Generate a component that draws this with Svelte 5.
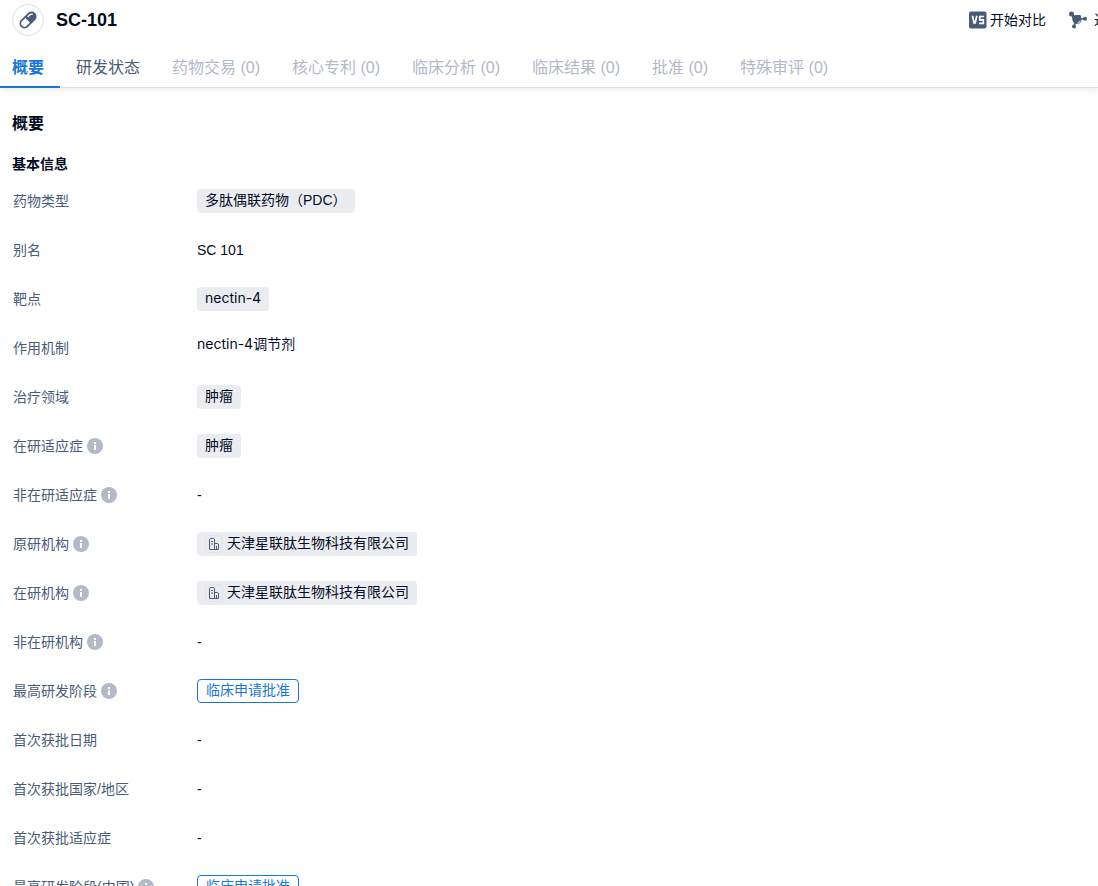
<script>
    const tabs = [
        { name: '概要', state: 'active' },
        { name: '研发状态', state: '' },
        { name: '药物交易 (0)', state: 'empty' },
        { name: '核心专利 (0)', state: 'empty' },
        { name: '临床分析 (0)', state: 'empty' },
        { name: '临床结果 (0)', state: 'empty' },
        { name: '批准 (0)', state: 'empty' },
        { name: '特殊审评 (0)', state: 'empty' }
    ];

    // type: tag | org | stage | strong | text
    const rows = [
        { label: '药物类型', value: '多肽偶联药物（PDC）', type: 'tag' },
        { label: '别名', value: 'SC 101', type: 'text' },
        { label: '靶点', value: 'nectin-4', type: 'tag', latin: true },
        { label: '作用机制', value: 'nectin-4调节剂', type: 'strong' },
        { label: '治疗领域', value: '肿瘤', type: 'tag' },
        { label: '在研适应症', info: true, value: '肿瘤', type: 'tag' },
        { label: '非在研适应症', info: true, value: '-', type: 'text' },
        { label: '原研机构', info: true, value: '天津星联肽生物科技有限公司', type: 'org' },
        { label: '在研机构', info: true, value: '天津星联肽生物科技有限公司', type: 'org' },
        { label: '非在研机构', info: true, value: '-', type: 'text' },
        { label: '最高研发阶段', info: true, value: '临床申请批准', type: 'stage' },
        { label: '首次获批日期', value: '-', type: 'text' },
        { label: '首次获批国家/地区', value: '-', type: 'text' },
        { label: '首次获批适应症', value: '-', type: 'text' },
        { label: '最高研发阶段(中国)', info: true, value: '临床申请批准', type: 'stage' }
    ];
</script>

<div class="page">
    <header>
        <div class="title-bar">
            <span class="avatar">
                <svg width="20" height="20" viewBox="0 0 20 20" aria-hidden="true">
                    <g transform="rotate(45 10 10)">
                        <rect x="5" y="0" width="10" height="20" rx="5" fill="#4a5b78" />
                        <path d="M6.800 10.500h6.400v4.500a3.200 3.200 0 0 1-6.400 0z" fill="#fff" />
                        <path d="M7.600 7.500V5a2.400 2.400 0 0 1 1.200-2" fill="none" stroke="#fff" stroke-width="1.400" stroke-linecap="round" />
                    </g>
                </svg>
            </span>
            <h1>SC-101</h1>
            <div class="actions">
                <button type="button">
                    <svg width="18" height="18" viewBox="0 0 18 18" aria-hidden="true">
                        <rect x="0" y="0.5" width="17.500" height="17" rx="2" fill="#4a5b78" />
                        <path d="M3.500 4.800l1.500 7h1.200l1.600-7M15 5.500h-4.200V8.800h3.500v3.500h-4.300" fill="none" stroke="#fff" stroke-width="1.700" />
                    </svg>
                    开始对比
                </button>
                <button type="button" class="evolve">
                    <svg width="20" height="18" viewBox="0 0 20 18" aria-hidden="true">
                        <path d="M3 3l6 5.500M9 8.500l8-1M8 9l-2 6.500" stroke="#4a5b78" stroke-width="1.500" />
                        <path d="M3.500 4.500l9-.5 1 4-5.500 5-3-3.500z" fill="#4a5b78" />
                        <circle cx="3.500" cy="3" r="2.500" fill="#4a5b78" />
                        <circle cx="9" cy="8.500" r="4.600" fill="#4a5b78" />
                        <circle cx="17" cy="7.800" r="2" fill="#4a5b78" />
                        <circle cx="6" cy="15.500" r="2" fill="#4a5b78" />
                        <path d="M12.300 9.500a3.500 3.500 0 0 1-2.800 2.700" fill="none" stroke="#fff" />
                    </svg>
                    进化关系
                </button>
            </div>
        </div>
        <nav>
            {#each tabs as tab}
                <a href="#top" class={tab.state}>{tab.name}</a>
            {/each}
        </nav>
    </header>

    <main>
        <h2>概要</h2>
        <h3>基本信息</h3>
        <dl>
            {#each rows as row}
                <div class="row">
                    <dt>
                        {row.label}
                        {#if row.info}
                            <svg width="16" height="16" viewBox="0 0 16 16" aria-hidden="true">
                                <circle cx="8" cy="8" r="8" fill="#b3b9c7" />
                                <path d="M7 4h2v2H7zM7 7h2v5H7z" fill="#fff" />
                            </svg>
                        {/if}
                    </dt>
                    <dd>
                        <span class={row.type} class:latin={row.latin}>
                            {#if row.type === 'org'}
                                <span class="org-icon">
                                    <svg width="16" height="16" viewBox="0 0 16 16" aria-hidden="true">
                                        <path d="M3.500 13.500V3.200l.7-.7h3.600l.7.700v10.300zM8.500 7.500h3.300l.7.700v5.300H8.500M5 5.500h2M5 8h2M10.500 10v3" fill="none" stroke="#4a5b78" />
                                    </svg>
                                </span>
                            {/if}
                            {row.value}
                        </span>
                    </dd>
                </div>
            {/each}
        </dl>
    </main>
</div>

<style>
    :global(body) {
        margin: 0;
        background: #fff;
    }

    .page {
        overflow: hidden;
        font: 14px/24px "Liberation Sans", "Noto Sans CJK SC", sans-serif;
        color: #030b1f;
    }

    header {
        box-shadow: 0 2px 6px rgba(0, 0, 0, 0.08);
    }

    .title-bar {
        display: flex;
        align-items: center;
        height: 40px;
        padding-left: 12px;
        white-space: nowrap;
    }

    .avatar {
        display: flex;
        align-items: center;
        justify-content: center;
        flex: none;
        box-sizing: border-box;
        width: 32px;
        height: 32px;
        border: 1px solid #dfe1e8;
        border-radius: 50%;
    }

    h1 {
        margin: 0 0 0 12px;
        font: 600 18px/24px "Liberation Sans", sans-serif;
    }

    /* the last action runs past the right edge of the pane */
    .actions {
        display: flex;
        gap: 22px;
        margin-left: auto;
        margin-right: -52px;
    }

    button {
        display: flex;
        align-items: center;
        gap: 3px;
        padding: 0;
        border: 0;
        background: none;
        font: inherit;
        color: inherit;
        cursor: pointer;
    }

    .evolve {
        gap: 6px;
    }

    nav {
        display: flex;
        height: 48px;
        box-shadow: inset 0 -1px #e0e0e0;
    }

    nav a {
        box-sizing: border-box;
        padding: 0 16px;
        font-size: 16px;
        line-height: 56px;
        white-space: nowrap;
        text-decoration: none;
        color: #4a5b78;
    }

    nav a:first-child {
        padding-left: 12px;
    }

    nav .active {
        border-bottom: 2px solid #1877d8;
        font-weight: 700;
        color: #1877d8;
    }

    nav .empty {
        color: #b3b9c7;
    }

    main {
        padding: 24px 12px;
    }

    h2 {
        margin: 0 0 16px;
        font-size: 16px;
        line-height: 24px;
        font-weight: 700;
    }

    h3 {
        margin: 0 0 13px;
        font-size: 14px;
        line-height: 24px;
    }

    dl {
        display: grid;
        gap: 25px;
        margin: 0;
    }

    .row {
        display: flex;
        height: 24px;
        padding-left: 1px;
    }

    dt {
        display: flex;
        align-items: center;
        gap: 4px;
        width: 184px;
        flex: none;
        color: #4a5b78;
    }

    dd {
        display: flex;
        align-items: flex-start;
        margin: 0;
        white-space: nowrap;
    }

    .tag,
    .org,
    .stage {
        box-sizing: border-box;
        height: 24px;
        padding: 0 8px;
        border-radius: 4px;
        background: #ebecf0;
        line-height: 22px;
    }

    .org {
        display: flex;
    }

    .stage {
        border: 1px solid #1877d8;
        background: #fff;
        color: #1877d8;
        line-height: 20px;
    }

    .org-icon {
        display: flex;
        box-sizing: border-box;
        width: 18px;
        height: 18px;
        margin: 3px 4px 3px 0;
        border: 1px solid #e1e4eb;
        border-radius: 4px;
    }

    .latin,
    .strong {
        font-family: Inter, "Noto Sans CJK SC", sans-serif;
    }

    .strong {
        line-height: 16px;
    }
</style>
